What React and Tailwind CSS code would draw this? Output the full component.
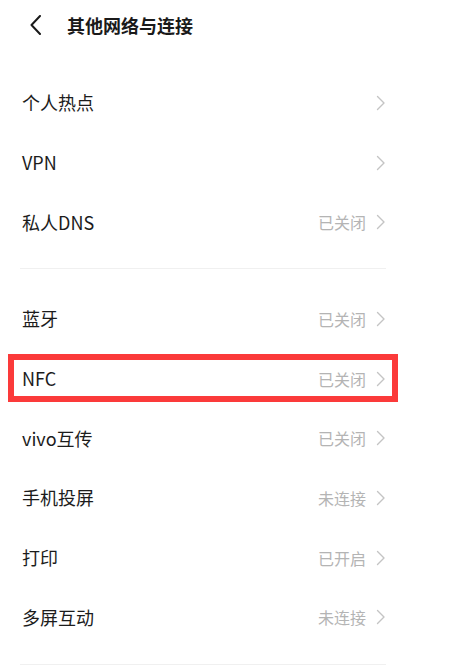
const font = { fontFamily: '"Noto Sans CJK SC", "Noto Sans", sans-serif' };

const Chevron = () => (
  <svg width="10" height="16" viewBox="0 0 10 16" fill="none">
    <path d="M1.5 1.5 L8 8 L1.5 14.5" stroke="#c4c4c4" strokeWidth="1.4" strokeLinecap="round" strokeLinejoin="round" />
  </svg>
);

const Row = ({ label, value, marked }) => (
  <div className="relative flex h-[59.7px] items-center justify-between">
    <span className="pl-[2px] text-[18px] text-[#1c1c1c]">{label}</span>
    <div className="flex items-center gap-[10px]">
      {value && <span className="text-[16px] text-[#b4b4b4]">{value}</span>}
      <Chevron />
    </div>
    {marked && (
      <div className="absolute left-[-12px] right-[-12px] top-[5px] bottom-[6px] border-[6px] border-[#fb3a3a]" />
    )}
  </div>
);

export default function App() {
  const group1 = [
    { label: "个人热点" },
    { label: "VPN" },
    { label: "私人DNS", value: "已关闭" },
  ];
  const group2 = [
    { label: "蓝牙", value: "已关闭" },
    { label: "NFC", value: "已关闭", marked: true },
    { label: "vivo互传", value: "已关闭" },
    { label: "手机投屏", value: "未连接" },
    { label: "打印", value: "已开启" },
    { label: "多屏互动", value: "未连接" },
  ];

  return (
    <div className="h-[672px] w-[453px] overflow-hidden bg-white" style={font}>
      <div className="w-[406px] px-5">
        <div className="flex h-[50px] items-center">
          <svg width="14" height="20" viewBox="0 0 14 20" fill="none" className="ml-[9px]">
            <path d="M11 1 L2.5 10 L11 19" stroke="#1a1a1a" strokeWidth="2" strokeLinecap="round" strokeLinejoin="round" />
          </svg>
          <h1 className="ml-[24px] text-[18px] font-semibold text-[#1a1a1a]">其他网络与连接</h1>
        </div>

        <div className="mt-[23px]">
          {group1.map((item) => (
            <Row key={item.label} {...item} />
          ))}
        </div>

        <div className="mt-[16px] h-px bg-[#f0f0f0]" />

        <div className="mt-[20px]">
          {group2.map((item) => (
            <Row key={item.label} {...item} />
          ))}
        </div>

        <div className="mt-[17px] h-px bg-[#f0f0f0]" />
      </div>
    </div>
  );
}
